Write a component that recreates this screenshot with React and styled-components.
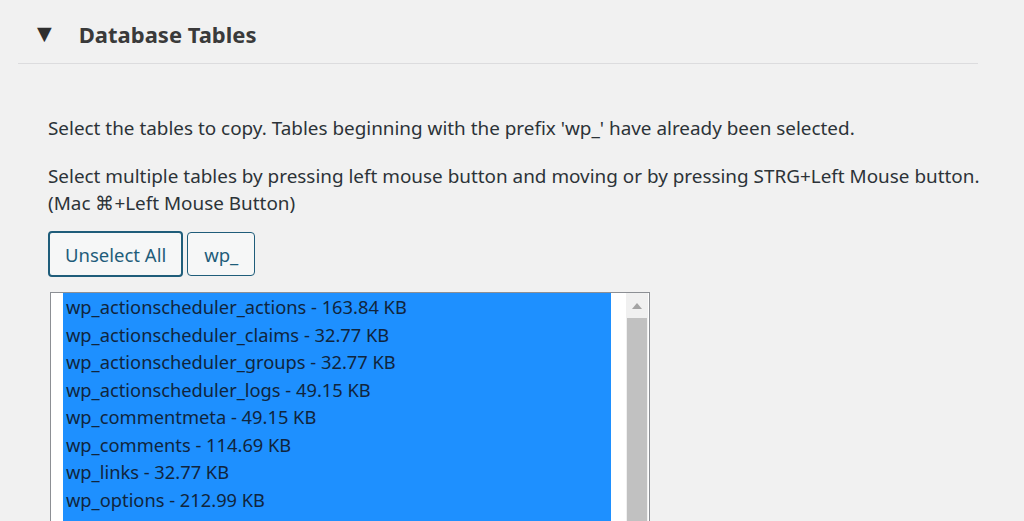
import React from "react";
import styled, { createGlobalStyle } from "styled-components";

const Global = createGlobalStyle`
  html, body { margin: 0; padding: 0; background: #f1f1f1; }
  body { font-family: "Noto Sans", "Open Sans", sans-serif; color: #3c434a; overflow: hidden; }
`;

const Page = styled.div`
  width: 1024px;
  height: 521px;
  overflow: hidden;
`;

const Section = styled.section`
  margin-left: 18px;
  width: 960px;
`;

const Header = styled.h2`
  margin: 0;
  height: 64px;
  box-sizing: border-box;
  border-bottom: 1px solid #dcdcde;
  display: flex;
  align-items: center;
  gap: 22px;
  padding: 4px 0 0 14px;
  font-size: 22px;
  font-weight: 700;
  color: #3a3a3a;
`;

const Arrow = styled.span`
  font-size: 25px;
  color: #2f2f2f;
  line-height: 1;
  margin-top: -2px;
`;

const Body = styled.div`
  padding: 51px 0 0 30px;
`;

const Text = styled.p`
  margin: 0 0 ${(p) => p.$mb || 0}px;
  font-size: 18.9px;
  line-height: 27px;
  color: #2c3338;
  white-space: nowrap;
`;

const Buttons = styled.div`
  display: flex;
  gap: 4px;
  margin-top: 14px;
`;

const Button = styled.button`
  font-family: inherit;
  font-size: 18.5px;
  height: ${(p) => (p.$focus ? 46 : 44)}px;
  margin-top: ${(p) => (p.$focus ? 0 : 1)}px;
  padding: 0 ${(p) => (p.$focus ? 15 : 16)}px;
  background: #f6f7f7;
  color: #1f5d7a;
  border: ${(p) => (p.$focus ? 2 : 1)}px solid #1f5d7a;
  border-radius: 4px;
  box-shadow: ${(p) => (p.$focus ? "0 0 0 1px #f6f7f7 inset" : "none")};
  cursor: pointer;
`;

const ListBox = styled.div`
  margin: 15px 0 0 2px;
  width: 600px;
  height: 300px;
  box-sizing: border-box;
  border: 1px solid #8c8f94;
  background: #fff;
  display: flex;
  padding: 0 1px 0 12px;
`;

const Options = styled.div`
  flex: 0 0 548px;
  display: flex;
  flex-direction: column;
`;

const Option = styled.div`
  height: 27.5px;
  line-height: 27.5px;
  font-size: 18.3px;
  padding-left: 3px;
  background: #1e90ff;
  color: #10253d;
  white-space: nowrap;
`;

const ScrollBar = styled.div`
  margin-left: auto;
  width: 22px;
  background: #f0f0f0;
  display: flex;
  flex-direction: column;
`;

const ScrollArrow = styled.div`
  height: 25px;
  display: flex;
  align-items: center;
  justify-content: center;
`;

const Thumb = styled.div`
  flex: 1;
  margin: 0 1px;
  background: #c1c1c1;
`;

const tables = [
  "wp_actionscheduler_actions - 163.84 KB",
  "wp_actionscheduler_claims - 32.77 KB",
  "wp_actionscheduler_groups - 32.77 KB",
  "wp_actionscheduler_logs - 49.15 KB",
  "wp_commentmeta - 49.15 KB",
  "wp_comments - 114.69 KB",
  "wp_links - 32.77 KB",
  "wp_options - 212.99 KB",
  "wp_postmeta - 49.15 KB",
  "wp_posts - 98.30 KB",
];

export default function App() {
  return (
    <Page>
      <Global />
      <Section>
        <Header>
          <Arrow>▼</Arrow>
          <span>Database Tables</span>
        </Header>
        <Body>
          <Text $mb={21}>
            Select the tables to copy. Tables beginning with the prefix 'wp_' have already been selected.
          </Text>
          <Text>
            Select multiple tables by pressing left mouse button and moving or by pressing STRG+Left Mouse button.
            <br />
            (Mac ⌘+Left Mouse Button)
          </Text>
          <Buttons>
            <Button $focus>Unselect All</Button>
            <Button>wp_</Button>
          </Buttons>
          <ListBox>
            <Options>
              {tables.map((t) => (
                <Option key={t}>{t}</Option>
              ))}
            </Options>
            <ScrollBar>
              <ScrollArrow>
                <svg width="10" height="6" viewBox="0 0 10 6">
                  <path d="M5 0 L10 6 L0 6 Z" fill="#a3a3a3" />
                </svg>
              </ScrollArrow>
              <Thumb />
            </ScrollBar>
          </ListBox>
        </Body>
      </Section>
    </Page>
  );
}
